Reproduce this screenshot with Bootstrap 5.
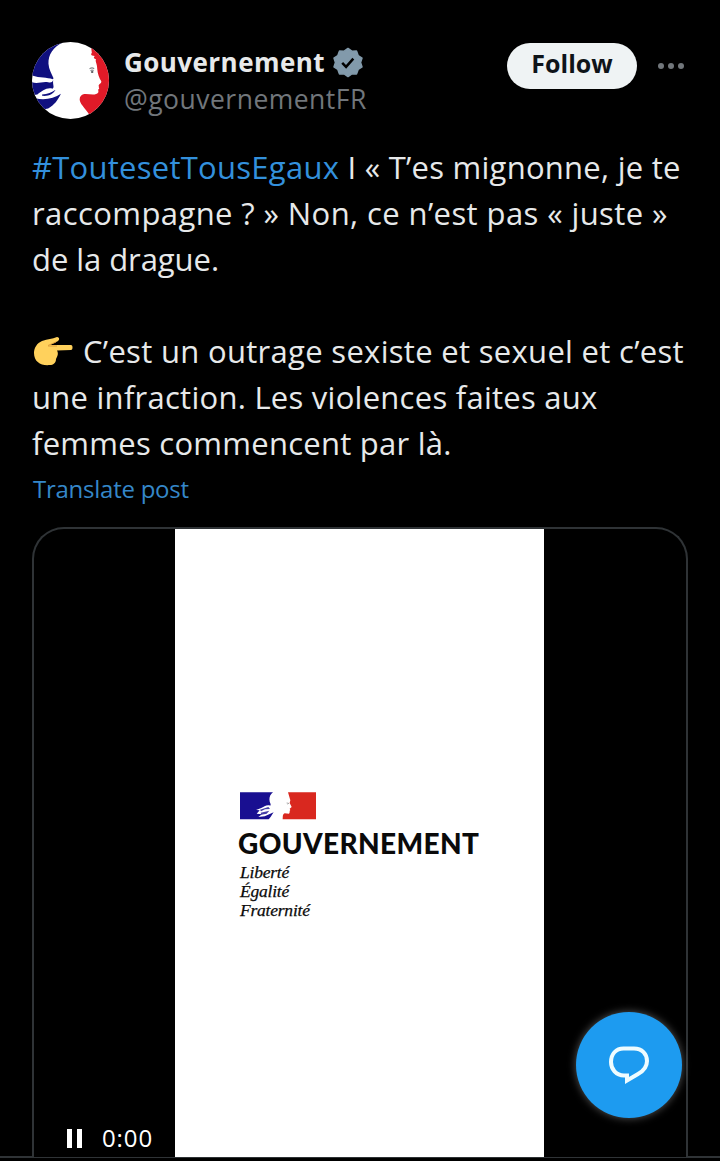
<!DOCTYPE html>
<html lang="fr" data-bs-theme="dark">
<head>
<meta charset="utf-8">
<meta name="viewport" content="width=device-width, initial-scale=1">
<title>Gouvernement</title>
<link href="https://cdn.jsdelivr.net/npm/bootstrap@5.3.0/dist/css/bootstrap.min.css" rel="stylesheet">
<style>
  body { background:#000; color:#e7e9ea; font-family:"Open Sans","Noto Sans",sans-serif; height:1161px; overflow:hidden; }
  .post { height:1158px; padding:42px 32px 0; border-bottom:2px solid #2f3336; }
  .avatar { width:77px; height:77px; }
  .author { margin-left:15px; padding-top:1px; }
  .display-name { font-size:26px; font-weight:700; line-height:38px; letter-spacing:.44px; }
  .handle { font-size:26.500px; line-height:38px; color:#71767b; letter-spacing:.48px; margin-top:-1px; }
  .btn-follow { --bs-btn-bg:#eff3f4; --bs-btn-color:#0f1419; --bs-btn-hover-bg:#d7dbdc; width:130px; height:46px; font-size:25px; font-weight:700; line-height:41px; padding:0 0 5px; border:0; margin-top:1px; }
  .more { margin:20px 3px 0 20px; }
  .post-text { margin-top:26px; font-size:31px; line-height:46px; letter-spacing:.26px; }
  .post-text .line { height:46px; white-space:nowrap; position:relative; top:-1px; }
  .ls-wide { letter-spacing:.41px; }
  .ls-mid { letter-spacing:.31px; }
  .ls-none { letter-spacing:-.06px; }
  .hand { margin-left:2px; margin-right:10px; }
  .tag { color:#3390dc; }
  .translate { color:#3587c8; font-size:24px; line-height:44px; padding-left:1px; text-decoration:none; letter-spacing:-.25px; }
  .video { margin-top:16px; height:630px; border:2px solid #2f3336; border-bottom:0; border-radius:32px 32px 0 0; overflow:hidden; background:#000; }
  .player-side { width:141px; }
  .frame { width:369px; padding:263px 0 0 65px; color:#0a0a0a; }
  .brand { font-family:Lato,sans-serif; font-weight:900; font-size:28px; line-height:34px; letter-spacing:.38px; margin-top:6px; margin-left:-2px; }
  .motto { font-family:"Liberation Serif",serif; font-style:italic; font-size:17.5px; line-height:19px; margin-top:3px; letter-spacing:-.22px; -webkit-text-stroke:.25px #0a0a0a; }
  .time { font-size:24px; line-height:32px; color:#fff; letter-spacing:.9px; margin-left:19px; }
  .controls { margin-bottom:3px; }
  .fab { width:106px; height:106px; right:38px; top:1012px; background:#1d9bf0; box-shadow:0 0 9px rgba(255,255,255,.35); }
</style>
</head>
<body>
<main class="post">
  <header class="d-flex align-items-start">
    <svg class="avatar flex-shrink-0" viewBox="36 38 229 229" aria-hidden="true">
      <defs><clipPath id="disc"><circle cx="150.500" cy="152.500" r="114.500"/></clipPath></defs>
      <g clip-path="url(#disc)">
        <rect x="36" y="38" width="229" height="229" fill="#fff"/>
        <path d="M36 38H130C98 53 84 76 85 103C86 120 94 132 100 146L98 149C80 143 60 146 36 138Z" fill="#10107f"/>
        <path d="M36 158C54 163 68 155 84 158C94 161 98 155 99 151C97 166 104 172 97 177C80 172 66 184 52 194L36 196ZM66 194C82 194 96 188 106 180C100 192 86 200 66 198ZM46 205C72 212 102 206 122 192C112 212 104 224 84 236L60 240Z" fill="#10107f"/>
        <path d="M210 38H270V267H214C200 238 180 226 178 211C177 203 181 195 191 193C209 192 226 198 233 188C235 183 230 180 236 176C233 172 236 170 234 167C237 161 243 160 242 155C236 145 231 132 230 118C230 101 222 94 227 90C219 88 218 83 223 80C213 79 209 75 214 71Z" fill="#e01a28"/>
        <path d="M207 118q8-6 14 0M210 124q5-5 9 0" fill="none" stroke="#85878c" stroke-width="3"/><circle cx="215" cy="127" r="3.500" fill="#66686c"/>
      </g>
    </svg>
    <div class="author flex-grow-1">
      <div class="d-flex align-items-center">
        <span class="display-name">Gouvernement</span>
        <svg class="ms-2" width="30" height="31" viewBox="0 0 31 31" aria-label="Verified"><path d="M15.500 1L19.500 3.800L24.300 3.600L26 8.300L30 11L28.500 15.500L30 20L26 22.700L24.300 27.400L19.500 27.200L15.500 30L11.500 27.200L6.700 27.400L5 22.700L1 20L2.500 15.500L1 11L5 8.300L6.700 3.600L11.500 3.800Z" fill="#829aab" stroke="#829aab" stroke-width="1.500" stroke-linejoin="round"/><path d="M9.500 16L13.500 20L21 11.500" fill="none" stroke="#000" stroke-width="2.600"/></svg>
      </div>
      <div class="handle">@gouvernementFR</div>
    </div>
    <button class="btn btn-follow rounded-pill" type="button">Follow</button>
    <svg class="more" width="28" height="8" viewBox="0 0 28 8" fill="#71767b" aria-label="More"><circle cx="4" cy="4" r="3"/><circle cx="14" cy="4" r="3"/><circle cx="24" cy="4" r="3"/></svg>
  </header>

  <div class="post-text">
    <div class="line"><span class="tag">#ToutesetTousEgaux</span> I « T’es mignonne, je te</div>
    <div class="line ls-wide">raccompagne ? » Non, ce n’est pas « juste »</div>
    <div class="line ls-none">de la drague.</div>
    <div class="line"></div>
    <div class="line ls-mid d-flex align-items-center">
      <svg class="hand" width="39" height="31" viewBox="1 0 39 31" aria-label="👉"><path d="M1 17C1 12 4 7 9 5C15 3 19 3 24 1C27 1 27 5 23 6L17 9H38C40 9 40 14 38 14L24 14.500C26 18 24 21 23 23C23 27 20 29 17 29C8 30 1 26 1 17Z" fill="#ffd15c"/><path d="M15 9.500L23 6M15 10H24" stroke="#dd9f3d" stroke-width="1"/></svg>
      <span>C’est un outrage sexiste et sexuel et c’est</span>
    </div>
    <div class="line">une infraction. Les violences faites aux</div>
    <div class="line">femmes commencent par là.</div>
  </div>
  <a class="translate d-block" href="#">Translate post</a>

  <section class="video d-flex">
    <div class="player-side d-flex align-items-end">
      <div class="controls d-flex align-items-center ps-4"><svg class="ms-2" width="17" height="20" fill="#fff" aria-label="Pause"><path d="M1 1h5v19H1zM11 1h5v19h-5z"/></svg>
      <span class="time">0:00</span></div>
    </div>
    <div class="frame bg-white">
      <svg class="d-block" width="78" height="28" viewBox="46 37 234 84" aria-hidden="true">
        <path d="M46 38H145C134 46 131 60 138 74L137 78C125 74 119 82 108 86L94 91L105 92L96 102L112 104L101 112L120 110L147 98C140 107 137 115 132 119H46Z" fill="#190f91"/>
        <path d="M106 90l25-8 5 6-15 1-12 6zM108 99l26-6-8 9-16 3z" fill="#190f91" opacity=".8"/>
        <path d="M190 38H274V119H174C175 111 173 104 180 101L193 102C197 98 193 94 197 91L195 87L201 82L195 70L197 62Z" fill="#d9281f"/>
        <path d="M186 70l6 1-3 3" fill="none" stroke="#777" stroke-width="2"/>
      </svg>
      <div class="brand">GOUVERNEMENT</div>
      <div class="motto"><div>Liberté</div><div>Égalité</div><div>Fraternité</div></div>
    </div>
  </section>
</main>
<button class="fab btn rounded-circle position-absolute d-flex align-items-center justify-content-center border-0 p-0" type="button" aria-label="Message">
  <svg width="44" height="44" viewBox="0 0 44 44" fill="none" stroke="#effcff" stroke-width="4"><path d="M16.500 5.500H27C35 5.500 40 11 40 18C40 24 36.500 28 31 31L20 37.500V32.500H17C9 32.500 4 26 4 19C4 11 9 5.500 16.500 5.500Z"/></svg>
</button>
<script src="https://cdn.jsdelivr.net/npm/bootstrap@5.3.0/dist/js/bootstrap.bundle.min.js"></script>
</body>
</html>
